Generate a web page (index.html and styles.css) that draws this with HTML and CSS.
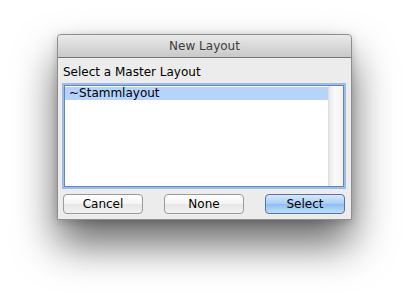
FILE: index.html
```html
<!DOCTYPE html>
<html lang="en">
<head>
    <meta charset="UTF-8">
    <title>New Layout</title>
    <link rel="stylesheet" href="styles.css">
</head>
<body>
    <div class="window">
        <div class="titlebar">New Layout</div>
        <div class="content">
            <div class="label">Select a Master Layout</div>
            <div class="listbox">
                <div class="rows">
                    <div class="row selected">~Stammlayout</div>
                </div>
                <div class="scrollbar"></div>
            </div>
            <div class="buttons">
                <button class="btn">Cancel</button>
                <button class="btn">None</button>
                <button class="btn default">Select</button>
            </div>
        </div>
    </div>
</body>
</html>
```

FILE: styles.css
```css
html, body {
    height: 100%;
}
body {
    margin: 0;
    padding: 34px 0 0 57px;
    box-sizing: border-box;
    background: #fff;
    font-family: "DejaVu Sans", sans-serif;
    font-size: 12px;
    color: #000;
}
.window {
    width: 293px;
    height: 184px;
    border: 1px solid #8e8e8e;
    border-radius: 4px 4px 0 0;
    background: #ececec;
    box-shadow: 0 2px 8px rgba(0, 0, 0, 0.18), 0 24px 42px rgba(0, 0, 0, 0.6);
    display: flex;
    flex-direction: column;
}
.titlebar {
    height: 22px;
    line-height: 23px;
    text-align: center;
    color: #3c3c3c;
    background: linear-gradient(#eaeaea, #c9c9c9);
    border-bottom: 1px solid #777;
    border-radius: 4px 4px 0 0;
}
.content {
    flex: 1;
    padding: 6px 5px 0 5px;
    display: flex;
    flex-direction: column;
}
.label {
    height: 16px;
    line-height: 16px;
}
.listbox {
    margin: 5px 2px 0 1px;
    height: 100px;
    border: 1px solid #5f86c2;
    box-shadow: 0 0 0 2px #9dbde6;
    background: #fff;
    display: flex;
}
.rows {
    flex: 1;
    padding-top: 1px;
}
.row {
    height: 13px;
    line-height: 13px;
    padding-left: 4px;
}
.row.selected {
    background: #b5d3fb;
}
.scrollbar {
    width: 14px;
    background: linear-gradient(to right, #e8e8e8, #fafafa 40%, #f2f2f2);
    border-left: 1px solid #ddd;
}
.buttons {
    margin-top: 7px;
    display: flex;
    justify-content: space-between;
    padding-right: 1px;
}
.btn {
    width: 80px;
    height: 20px;
    padding: 0;
    font-family: "DejaVu Sans", sans-serif;
    font-size: 12px;
    color: #000;
    border: 1px solid #9a9a9a;
    border-radius: 4px;
    background: linear-gradient(#ffffff, #f4f4f4 50%, #e6e6e6 51%, #f2f2f2);
}
.btn.default {
    border-color: #5a6fa8;
    background: linear-gradient(#d6e8fc, #a9cdf6 50%, #8fbdf1 51%, #bfe0fb);
}
```
